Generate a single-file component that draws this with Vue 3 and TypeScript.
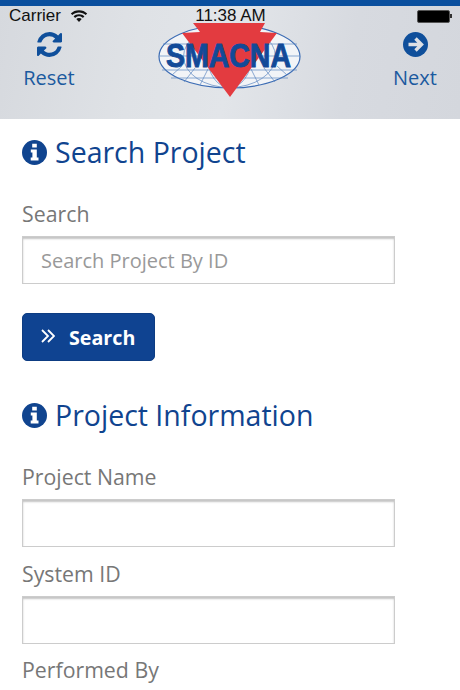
<template>
  <div class="screen">
    <header class="header">
      <div class="status-bar">
        <div class="carrier">
          <span>Carrier</span>
          <svg class="wifi" viewBox="0 0 18 14" width="18" height="14">
            <path d="M9 1.200C5.700 1.200 2.900 2.400.8 4.500l1.500 1.600C4 4.400 6.400 3.400 9 3.400s5 1 6.700 2.700l1.500-1.600C15.100 2.400 12.300 1.200 9 1.200z" />
            <path d="M9 5.200c-2.200 0-4.100.8-5.400 2.100l1.500 1.600c1-1 2.400-1.600 3.900-1.600s2.900.6 3.900 1.600l1.500-1.600C13.100 6 11.200 5.200 9 5.200z" />
            <path d="M9 9c-1.100 0-2 .4-2.700 1.100L9 13l2.700-2.900C11 9.400 10.100 9 9 9z" />
          </svg>
        </div>
        <span class="time">11:38 AM</span>
        <div class="battery"><span class="battery-fill"></span><span class="battery-tip"></span></div>
      </div>
      <nav class="nav">
        <div class="nav-item">
          <svg class="nav-icon" viewBox="0 0 1536 1536">
            <path d="M1511 928q0 5-1 7-64 268-268 434.500t-478 166.500q-146 0-282.500-55t-243.500-155l-129 129q-19 19-45 19t-45-19-19-45v-448q0-26 19-45t45-19h448q26 0 45 19t19 45-19 45l-137 137q71 66 161 102t187 36q134 0 250-65t186-179q11-17 53-117 8-23 30-23h192q13 0 22.500 9.500t9.500 22.500zm25-800v448q0 26-19 45t-45 19h-448q-26 0-45-19t-19-45 19-45l138-138q-148-137-349-137-134 0-250 65t-186 179q-11 17-53 117-8 23-30 23h-199q-13 0-22.500-9.500t-9.500-22.500v-7q65-268 270-434.500t480-166.500q146 0 284 55.500t245 156.500l130-129q19-19 45-19t45 19 19 45z" />
          </svg>
          <span>Reset</span>
        </div>
        <svg class="logo" viewBox="0 0 144 76" width="144" height="76">
          <ellipse cx="71.500" cy="33.500" rx="70.500" ry="31.500" fill="#f2f4f7" stroke="#3c6cb4" stroke-width="1.200" />
          <g fill="none" stroke="#5c86c0" stroke-width="0.700">
            <ellipse cx="71.500" cy="33.500" rx="46" ry="31" />
            <ellipse cx="71.500" cy="33.500" rx="22" ry="31" />
            <path d="M5 21h134M1 33h141M4 47h135M13 55h117" />
            <path d="M14 52l10-9M26 59l11-14M42 62l8-16M101 62l-8-16M117 59l-11-14M129 52l-10-9" />
          </g>
          <path d="M35 0h72l-5 9 17 1-47 64-48-64 18-1z" fill="#e33b40" />
          <text class="logo-text" text-anchor="middle" transform="translate(70.500 44) scale(1 1.180)">SMACNA</text>
        </svg>
        <div class="nav-item">
          <svg class="nav-icon" viewBox="0 0 25 25">
            <circle cx="12.500" cy="12.500" r="12.500" />
            <path class="arrow" d="M5.500 12.500h12M12.500 6.500l6 6-6 6" />
          </svg>
          <span>Next</span>
        </div>
      </nav>
    </header>

    <main class="content">
      <h2 class="title">
        <svg class="info" viewBox="0 0 25 25">
          <circle cx="12.500" cy="12.500" r="12.500" />
          <path class="info-mark" d="M10.200 3.800h4.600v3.700h-4.600zM8.800 9.600h6v8h1.700v3H8.700v-3h1.700v-5H8.800z" />
        </svg>
        Search Project
      </h2>
      <label class="label first">Search</label>
      <input class="field" type="text" placeholder="Search Project By ID" />
      <button class="search-btn" type="button">
        <svg class="double-angle" viewBox="0 0 14 14" width="14" height="14">
          <path d="M1 1l6 6-6 6M7 1l6 6-6 6" />
        </svg>
        Search
      </button>

      <h2 class="title second">
        <svg class="info" viewBox="0 0 25 25">
          <circle cx="12.500" cy="12.500" r="12.500" />
          <path class="info-mark" d="M10.200 3.800h4.600v3.700h-4.600zM8.800 9.600h6v8h1.700v3H8.700v-3h1.700v-5H8.800z" />
        </svg>
        Project Information
      </h2>
      <label class="label first">Project Name</label>
      <input class="field" type="text" />
      <label class="label">System ID</label>
      <input class="field" type="text" />
      <label class="label">Performed By</label>
      <input class="field" type="text" />
    </main>
  </div>
</template>

<script setup lang="ts">
</script>

<style>
html,
body {
  margin: 0;
  overflow: hidden;
  background: #fff;
}
</style>

<style scoped>
.screen {
  width: 460px;
  height: 690px;
  overflow: hidden;
  font-family: "Open Sans", sans-serif;
  background: #fff;
}
.header {
  height: 119px;
  box-sizing: border-box;
  border-top: 6px solid #0a4f9e;
  background: linear-gradient(100deg, #d6d9de 0%, #dfe2e6 30%, #e2e5e9 50%, #d7dae0 75%, #d4d7dd 100%);
}
.status-bar {
  height: 19px;
  padding: 0 8px 0 9px;
  display: grid;
  grid-template-columns: 1fr auto 1fr;
  align-items: center;
  font-family: "Liberation Sans", sans-serif;
  font-size: 17px;
  color: #111;
}
.carrier {
  display: flex;
  align-items: center;
  gap: 9px;
}
.wifi {
  fill: #111;
}
.time {
  position: relative;
  z-index: 1;
}
.battery {
  justify-self: end;
  display: flex;
  align-items: center;
}
.battery-fill {
  width: 31px;
  height: 11px;
  background: #000;
  border: 1px solid #555;
  border-radius: 2px;
}
.battery-tip {
  width: 2px;
  height: 4px;
  background: #333;
}
.nav {
  display: flex;
  justify-content: space-between;
  align-items: flex-start;
  padding: 0 19px 0 23px;
}
.nav-item {
  width: 52px;
  display: flex;
  flex-direction: column;
  align-items: center;
  gap: 7px;
  padding-top: 7px;
  font-size: 20px;
  line-height: 27px;
  color: #1b5a9f;
}
.nav-icon {
  width: 25px;
  height: 25px;
  fill: #0f4f9b;
}
.arrow {
  fill: none;
  stroke: #dde0e5;
  stroke-width: 3.400;
}
.logo {
  margin-top: -2px;
  margin-left: -4px;
}
.logo-text {
  font-family: "Liberation Sans", sans-serif;
  font-weight: 700;
  font-size: 28.500px;
  fill: #124a98;
  stroke: #124a98;
  stroke-width: 0.800;
}
.content {
  padding: 0 22px;
}
.title {
  margin: 14px 0 0;
  display: flex;
  align-items: center;
  gap: 8px;
  font-size: 28.500px;
  line-height: 38px;
  font-weight: 400;
  color: #10448f;
}
.title.second {
  margin-top: 35px;
}
.info {
  width: 25px;
  height: 25px;
  fill: #10448f;
  flex-shrink: 0;
}
.info-mark {
  fill: #fff;
}
.label {
  display: block;
  margin-top: 12.500px;
  font-size: 21.300px;
  line-height: 27px;
  color: #777;
}
.label.first {
  margin-top: 29px;
}
.field {
  display: block;
  width: 373px;
  height: 48px;
  margin-top: 9px;
  padding: 0 18px;
  box-sizing: border-box;
  border: 1px solid #ccc;
  border-radius: 0;
  box-shadow: inset 0 2px 2px #c4c4c4;
  font-family: inherit;
  font-size: 20px;
  color: #555;
  outline: none;
}
.field::placeholder {
  color: #999;
  opacity: 1;
}
.search-btn {
  display: flex;
  align-items: center;
  gap: 14px;
  width: 133px;
  height: 48px;
  margin-top: 29px;
  padding: 0 0 0 18px;
  box-sizing: border-box;
  border: 1px solid #0d3c82;
  border-radius: 5px;
  background: #0f4391;
  font-family: inherit;
  font-size: 19.700px;
  font-weight: 700;
  color: #fff;
}
.double-angle {
  fill: none;
  stroke: #fff;
  stroke-width: 1.800;
  margin-top: -2px;
}
</style>
